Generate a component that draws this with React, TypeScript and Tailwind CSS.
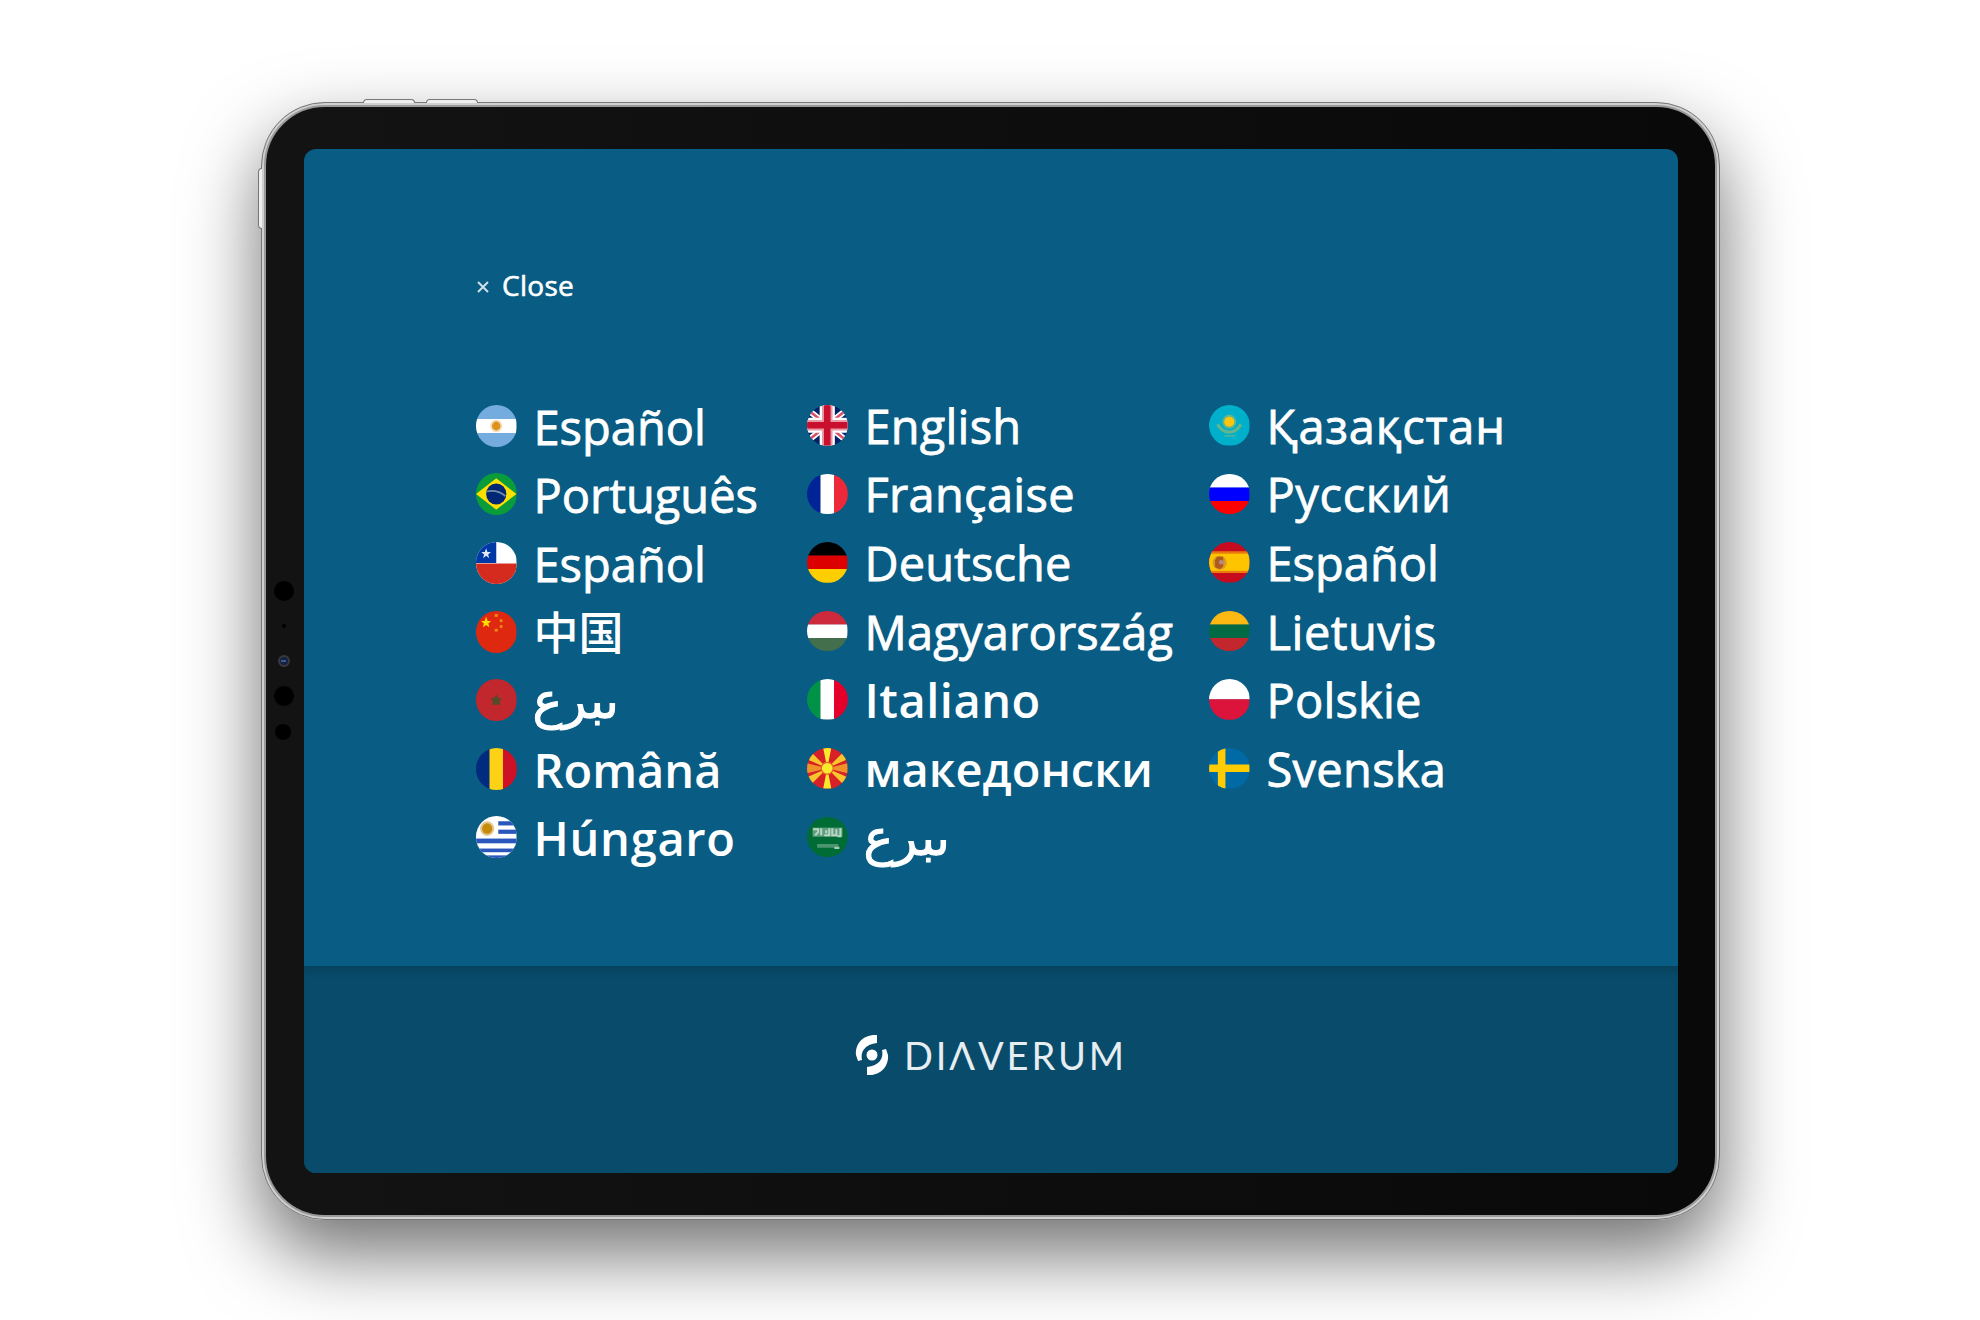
import React from "react";

function Disc({ children, tall }: { children: React.ReactNode; tall?: boolean }) {
  return (
    <svg viewBox="0 0 40 40" preserveAspectRatio="none" className={`w-[40.5px] shrink-0 overflow-hidden rounded-full ${tall ? "mt-px h-[42px]" : "h-[40.5px]"}`}>
      {children}
    </svg>
  );
}
const H = ({ c }: { c: string[] }) => (
  <>
    {c.map((f, i) => (
      <rect key={i} x="0" y={(40 / c.length) * i} width="40" height={40 / c.length + 0.3} fill={f} />
    ))}
  </>
);
const V = ({ c }: { c: string[] }) => (
  <>
    {c.map((f, i) => (
      <rect key={i} x={(40 / c.length) * i} y="0" width={40 / c.length + 0.3} height="40" fill={f} />
    ))}
  </>
);

const flags: Record<string, React.ReactNode> = {
  ar: (<><H c={["#74acdf", "#fff", "#74acdf"]} /><circle cx="20" cy="20" r="6" fill="#f6dfb8" /><circle cx="20" cy="20" r="4.2" fill="#dc921f" /></>),
  br: (<><rect width="40" height="40" fill="#0a9b3a" /><path d="M0 20L20 5L40 20L20 35Z" fill="#fedf00" /><circle cx="20" cy="20" r="10" fill="#002776" /><path d="M11 17.500Q21 15.500 29 22" stroke="#6f8fa8" strokeWidth="1.8" fill="none" /></>),
  cl: (<><rect width="40" height="40" fill="#fff" /><rect width="20" height="20" fill="#0039a6" /><rect y="20.500" width="40" height="20" fill="#d52b1e" /><path d="M10 6L11.300 9.600H14.800L12 11.800L13 15.500L10 13.200L7 15.500L8 11.800L5.200 9.600H8.700Z" fill="#dfe7f5" /></>),
  cn: (<><rect width="40" height="40" fill="#de2910" /><path d="M10 5.500L11.500 9.500H15L12.200 11.800L13.200 15.500L10 13.300L6.800 15.500L7.800 11.800L5 9.500H8.500Z" fill="#ffde00" /><g fill="#f09010"><rect x="18.500" y="3" width="3" height="2.500" /><rect x="23.500" y="8" width="2.600" height="2.600" /><rect x="23.500" y="13.500" width="2.600" height="2.600" /><rect x="18.500" y="17" width="3" height="2.500" /></g></>),
  ma: (<><rect width="40" height="40" fill="#c1272d" /><path d="M20 14.500L22 18H25.500L23.500 21L24 25L20 24L16 25L16.500 21L14.500 18H18Z" fill="#574a2b" /></>),
  ro: <V c={["#002b7f", "#fcd116", "#ce1126"]} />,
  uy: (<><rect width="40" height="40" fill="#fff" /><g fill="#2a57bd"><rect x="22" y="5" width="18" height="4" /><rect x="22" y="13" width="18" height="4" /><rect y="21.500" width="40" height="4.500" /><rect y="31" width="40" height="3.500" /><rect y="37.500" width="40" height="2.500" /></g><circle cx="11" cy="12" r="7" fill="#e3c68b" /><circle cx="11" cy="12" r="5" fill="#c68a0c" /></>),
  gb: (<><rect width="40" height="40" fill="#012169" /><path d="M0 4L40 36M0 36L40 4" stroke="#fff" strokeWidth="6" /><path d="M0 4L40 36M0 36L40 4" stroke="#d8506a" strokeWidth="2.500" /><path d="M20 0V40M0 20H40" stroke="#fff" strokeWidth="15" /><path d="M20 0V40M0 20H40" stroke="#e998a6" strokeWidth="10.500" /><path d="M20 0V40M0 20H40" stroke="#c8102e" strokeWidth="6.500" /></>),
  fr: <V c={["#002395", "#fff", "#ed2939"]} />,
  de: <H c={["#000", "#d00", "#ffce00"]} />,
  hu: <H c={["#cd2a3e", "#fff", "#436f4d"]} />,
  it: <V c={["#009246", "#fff", "#e4002b"]} />,
  mk: (<><rect width="40" height="40" fill="#d82126" /><g fill="#f8c52c"><path d="M0 15L20 20L0 25Z M40 15L20 20L40 25Z" fill="#f0922a" /><path d="M16 0H24L20 20Z M16 40H24L20 20Z" fill="#f8e92e" /><path d="M0 11L5 5L20 20Z M40 11L35 5L20 20Z M0 29L5 35L20 20Z M40 29L35 35L20 20Z" /></g><circle cx="20" cy="20" r="6.500" fill="#e8602a" /><circle cx="20" cy="20" r="5.300" fill="#f8e92e" /></>),
  sa: (<><rect width="40" height="40" fill="#006c35" /><rect x="5.500" y="10.500" width="29.500" height="9" fill="#5d9f7d" /><path d="M6 12H11V15L8 18M14 11V18M17 18H22V11M25 11V18H29V12M33 11V19H30M19 13V16" stroke="#b9d5c5" strokeWidth="2" fill="none" /><path d="M10 28.500H31" stroke="#4d9570" strokeWidth="3.500" /><path d="M27 30.500H32" stroke="#a5c9b5" strokeWidth="2" /></>),
  kz: (<><rect width="40" height="40" fill="#00afca" /><circle cx="20" cy="16.500" r="7" fill="#5cb68f" /><circle cx="20" cy="16.500" r="5" fill="#fec50c" /><path d="M8.500 19Q12 26 20 27Q28 26 31.500 19" stroke="#63b68b" strokeWidth="3" fill="none" /><path d="M15 30.500H26" stroke="#43b49f" strokeWidth="1.800" /></>),
  ru: <H c={["#fff", "#00f", "#f00"]} />,
  es: (<><rect width="40" height="40" fill="#c60b1e" /><rect y="9.500" width="40" height="21" fill="#ffc400" /><rect y="9.500" width="40" height="2" fill="#e8780f" /><rect y="28.500" width="40" height="2" fill="#e8780f" /><circle cx="10.500" cy="20.500" r="7" fill="#d99a25" /><path d="M8 14.500H14V24L11 27L6 25V18Z" fill="#ad5a1c" /><circle cx="12" cy="20" r="2.200" fill="#b58a8e" /></>),
  lt: <H c={["#fdb913", "#006a44", "#c1272d"]} />,
  pl: <H c={["#fff", "#dc143c"]} />,
  se: (<><rect width="40" height="40" fill="#006aa7" /><path d="M12.500 0V40M0 20H40" stroke="#fecc00" strokeWidth="7.500" /></>),
};

type Item = { f: string; t: string; cls: string };
const latin = "text-[47px] [-webkit-text-stroke:0.8px_white]";
const bold = "text-[47px] font-semibold";
const arabic = "text-[50px] -ml-px [-webkit-text-stroke:1px_white]";
const columns: { w: string; tall?: boolean; items: Item[] }[] = [
  { w: "w-[331px]", tall: true, items: [
    { f: "ar", t: "Español", cls: latin },
    { f: "br", t: "Português", cls: latin },
    { f: "cl", t: "Español", cls: latin },
    { f: "cn", t: "中国", cls: "text-[45px] font-medium" },
    { f: "ma", t: "ىبرع", cls: arabic + " mt-[-5px]" },
    { f: "ro", t: "Română", cls: bold },
    { f: "uy", t: "Húngaro", cls: bold + " tracking-[0.7px]" } ] },
  { w: "w-[402px]", items: [
    { f: "gb", t: "English", cls: latin + " tracking-[0.2px]" },
    { f: "fr", t: "Française", cls: latin + " tracking-[0.3px]" },
    { f: "de", t: "Deutsche", cls: latin + " tracking-[0.1px]" },
    { f: "hu", t: "Magyarország", cls: latin + " tracking-[0.2px]" },
    { f: "it", t: "Italiano", cls: bold + " tracking-[0.5px]" },
    { f: "mk", t: "македонски", cls: bold },
    { f: "sa", t: "ىبرع", cls: arabic + " mt-[-3px]" } ] },
  { w: "w-[340px]", items: [
    { f: "kz", t: "Қазақстан", cls: latin + " tracking-[0.8px]" },
    { f: "ru", t: "Русский", cls: latin + " tracking-[0.6px]" },
    { f: "es", t: "Español", cls: latin },
    { f: "lt", t: "Lietuvis", cls: latin + " tracking-[0.5px]" },
    { f: "pl", t: "Polskie", cls: latin + " tracking-[0.2px]" },
    { f: "se", t: "Svenska", cls: latin + " tracking-[0.3px]" } ] },
];

export default function App() {
  return (
    <div className="h-[1320px] w-[1980px] overflow-hidden bg-white pt-[102px] pl-[261px] font-['Open_Sans','Noto_Sans_CJK_SC','DejaVu_Sans',sans-serif] text-white">
      <div className="relative h-[1118px] w-[1459px] rounded-[64px] bg-[#d0d0d0] shadow-[0_34px_76px_rgba(0,0,0,0.56)]">
        <div className="absolute -top-[3px] left-[102px] h-[4px] w-[52px] rounded-t-sm border border-b-0 border-[#777] bg-[#eee]" />
        <div className="absolute -top-[3px] left-[165px] h-[4px] w-[52px] rounded-t-sm border border-b-0 border-[#777] bg-[#eee]" />
        <div className="absolute top-[66px] -left-[3px] h-[61px] w-[4px] rounded-l-sm border border-r-0 border-[#777] bg-[#eee]" />
        <div className="h-full rounded-[64px] border border-[#777] bg-[#d0d0d0] p-[2px]">
          <div className="h-full rounded-[61px] border-2 border-[#999] bg-linear-to-r from-[#131313] to-[#090909] pt-[42px] pl-[38px]">
            <div className="flex h-[1024px] w-[1374px] flex-col overflow-hidden rounded-[12px] bg-[#095c83]">
              <div className="h-[817px] pt-[114px] pl-[173px]">
                <div className="flex h-[44px] items-center text-[28px] tracking-[0.3px] [-webkit-text-stroke:0.6px_white]">
                  <svg viewBox="0 0 12 12" className="mt-[3px] mr-[13px] h-[12px] w-[12px]"><path d="M1 1L11 11M11 1L1 11" stroke="#cfe0ea" strokeWidth="2" /></svg>
                  Close
                </div>
                <div className="mt-[84px] -ml-px flex">
                  {columns.map((col, i) => (
                    <div key={i} className={`flex flex-col ${col.w}`}>
                      {col.items.map((it, j) => (
                        <div key={j} className="flex h-[68.6px] items-center gap-[17px]">
                          <Disc tall={col.tall}>{flags[it.f]}</Disc>
                          <span className={`leading-[68px] whitespace-nowrap ${col.tall ? "pt-[3px]" : "pt-px"} ${it.cls}`}>{it.t}</span>
                        </div>
                      ))}
                    </div>
                  ))}
                </div>
              </div>
              <div className="flex flex-1 items-center bg-[#084b6a] pl-[551px] shadow-[inset_0_8px_8px_-4px_rgba(0,0,0,0.15)]">
                <svg viewBox="0 0 34 42" className="mt-[-29px] mr-[15px] h-[42px] w-[34px]">
                  <path d="M22 1C8 0 0 10 1 21L3 27L7 26C5 18 10 10 22 9Z M12 41C26 42 34 32 33 21L31 15L27 16C29 24 24 32 12 33Z" fill="#fff" />
                  <circle cx="17" cy="21" r="5.500" fill="#fff" />
                </svg>
                <span className="mt-[-28px] font-['Lato'] text-[38px] tracking-[2.900px] text-[#e6eef2]">DIΛVERUM</span>
              </div>
            </div>
          </div>
        </div>
        <div className="absolute top-[479px] left-[13px] h-[20px] w-[20px] rounded-full bg-black" />
        <div className="absolute top-[522px] left-[21px] h-[4px] w-[4px] rounded-full bg-black" />
        <div className="absolute top-[553px] left-[17px] h-[12px] w-[12px] rounded-full border-2 border-[#3a3a3d] bg-[#14213f]"><div className="mt-[3px] ml-px h-[2px] w-[5px] bg-[#3e579c]" /></div>
        <div className="absolute top-[584px] left-[13px] h-[20px] w-[20px] rounded-full bg-black" />
        <div className="absolute top-[622px] left-[14px] h-[16px] w-[16px] rounded-full bg-black" />
      </div>
    </div>
  );
}
